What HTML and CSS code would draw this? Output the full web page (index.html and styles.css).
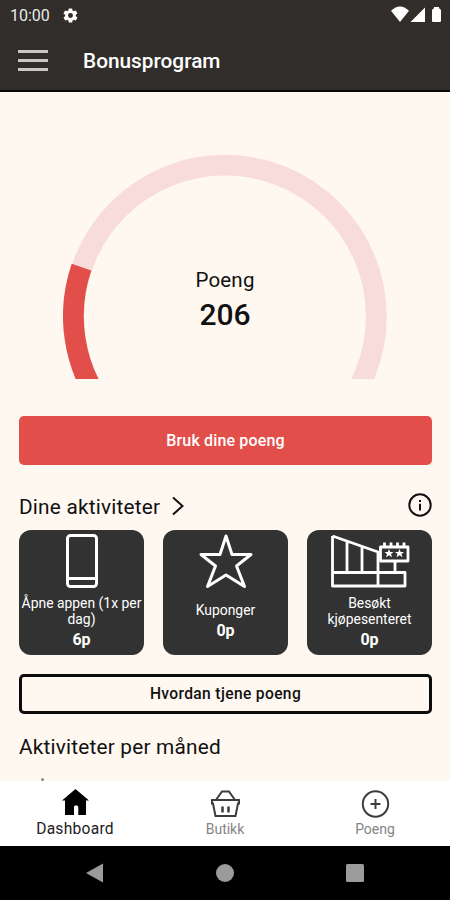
FILE: index.html
```
<!DOCTYPE html>
<html lang="no">
<head>
    <meta charset="UTF-8">
    <meta name="viewport" content="width=device-width, initial-scale=1.0">
    <title>Bonusprogram</title>
    <link rel="stylesheet" href="styles.css">
</head>
<body>
    <div class="app">
        <header class="header">
            <div class="status-bar">
                <span class="clock">10:00</span>
                <svg class="gear" width="17" height="17" viewBox="0 0 24 24">
                    <path d="M19.4 13a7.500 7.500 0 0 0 0-2l2.100-1.600a.5.5 0 0 0 .1-.6l-2-3.500a.5.5 0 0 0-.6-.2l-2.500 1a7.300 7.300 0 0 0-1.700-1l-.4-2.600a.5.5 0 0 0-.5-.4h-4a.5.5 0 0 0-.5.4L9 5.100a7.300 7.300 0 0 0-1.700 1l-2.500-1a.5.5 0 0 0-.6.2l-2 3.500a.5.5 0 0 0 .1.600L4.500 11a7.500 7.500 0 0 0 0 2l-2.100 1.600a.5.5 0 0 0-.1.600l2 3.500c.1.200.4.300.6.200l2.500-1a7.300 7.300 0 0 0 1.700 1l.4 2.600c0 .2.200.4.500.4h4c.2 0 .5-.2.500-.4l.4-2.600a7.300 7.300 0 0 0 1.700-1l2.500 1c.2.100.5 0 .6-.2l2-3.500a.5.5 0 0 0-.1-.6zM12 15.500a3.500 3.500 0 1 1 0-7 3.500 3.500 0 0 1 0 7z"/>
                </svg>
                <svg class="signals" width="54" height="18" viewBox="0 0 54 18">
                    <path d="M0 4.800Q9-3.800 18 4.800L9 16z"/>
                    <path d="M34 1.500V16H19.500z"/>
                    <path d="M41 4.500q0-1.500 2-2.200V1h5v1.300q2 .7 2 2.200V15q0 1-1 1h-7q-1 0-1-1z"/>
                </svg>
            </div>
            <div class="title-bar">
                <div class="menu"><span></span><span></span><span></span></div>
                <h1>Bonusprogram</h1>
            </div>
        </header>

        <main class="content">
            <div class="gauge">
                <svg width="324" height="225" viewBox="0 0 324 225">
                    <circle class="gauge-track" cx="162" cy="162.500" r="151.300"/>
                    <path class="gauge-value" d="M40 252A151.300 151.300 0 0 1 18.500 113.200"/>
                </svg>
                <div class="gauge-text">
                    <span class="gauge-label">Poeng</span>
                    <span class="gauge-number">206</span>
                </div>
            </div>

            <button class="btn-primary">Bruk dine poeng</button>

            <div class="section-head">
                <h2>Dine aktiviteter</h2>
                <svg class="chevron" width="12" height="20" viewBox="0 0 12 20"><path d="M1 1.500L10.500 10 1 18.500"/></svg>
                <svg class="info" width="24" height="24" viewBox="0 0 24 24">
                    <circle cx="12" cy="12" r="10.700"/>
                    <path d="M12 10.800v6.700M12 7v2"/>
                </svg>
            </div>

            <div class="cards">
                <div class="card">
                    <svg width="60" height="56" viewBox="0 0 60 56">
                        <rect x="15.500" y="2.500" width="29" height="51" rx="3"/>
                        <path d="M15.500 45.500h29"/>
                    </svg>
                    <span class="card-name">Åpne appen (1x per dag)</span>
                    <span class="card-points">6p</span>
                </div>
                <div class="card card-short">
                    <svg width="60" height="56" viewBox="0 0 60 56">
                        <path d="M30 3l6 18.500h19L40.500 33 48.500 53.500 30 42 11.500 53.500l8-20.500L5 21.500h19z"/>
                    </svg>
                    <span class="card-name">Kuponger</span>
                    <span class="card-points">0p</span>
                </div>
                <div class="card">
                    <svg class="mall" width="80" height="56" viewBox="0 0 80 56">
                        <path d="M2.500 3v50H75V39.500H2.500M2.500 3L48 19V53M17 8v31M32 13.500v26"/>
                        <path d="M65 28v11.500M50.500 14h27.500v14H50.500zM54.500 9.500v4M61 9.500v4M67.500 9.500v4M74 9.500v4"/>
                        <path class="stars" d="M59 16l1.200 3h3.300l-2.500 2 1 3.200-3-1.900-3 1.900 1-3.200-2.500-2h3.300zM69.500 16l1.200 3h3.300l-2.500 2 1 3.200-3-1.900-3 1.900 1-3.200-2.500-2h3.300z"/>
                    </svg>
                    <span class="card-name">Besøkt kjøpesenteret</span>
                    <span class="card-points">0p</span>
                </div>
            </div>

            <button class="btn-outline">Hvordan tjene poeng</button>

            <h2 class="month-title">Aktiviteter per måned</h2>
            <div class="chart-tick"></div>
        </main>

        <nav class="tabs">
            <a class="tab active">
                <svg width="30" height="30" viewBox="0 0 30 30"><path d="M15.500 1L29 12.500H26V27H18.300V19q0-1.500-1.500-1.500h-1.500Q14 17.500 14 19V27H5V12.500H2z"/></svg>
                <span>Dashboard</span>
            </a>
            <a class="tab">
                <svg width="30" height="30" viewBox="0 0 30 30"><path d="M2 12h27v3.500h-1L25.500 28h-20L3 15.500H2zM6 12l6-8.500h7l6 8.500"/><path class="slots" d="M12.500 18.500v6M18.500 18.500v6"/></svg>
                <span>Butikk</span>
            </a>
            <a class="tab">
                <svg width="30" height="30" viewBox="0 0 30 30"><circle cx="15.500" cy="16" r="12.700"/><path d="M15.500 11v10M10.500 16h10"/></svg>
                <span>Poeng</span>
            </a>
        </nav>

        <footer class="system-nav">
            <svg width="18" height="20" viewBox="0 0 18 20"><path d="M0 10L17 .5v19z"/></svg>
            <svg width="18" height="18" viewBox="0 0 18 18"><circle cx="9" cy="9" r="9"/></svg>
            <svg width="18" height="18" viewBox="0 0 18 18"><rect width="18" height="18" rx="1.500"/></svg>
        </footer>
    </div>
</body>
</html>
```
FILE: styles.css
```
* {
    box-sizing: border-box;
}
body {
    font-family: Roboto, "Liberation Sans", sans-serif;
    background-color: #fff8f1;
    color: #111;
    margin: 0;
}
h1, h2 {
    margin: 0;
}
button {
    font-family: inherit;
    display: block;
    width: 100%;
    padding: 0;
}
.app {
    display: flex;
    flex-direction: column;
    height: 900px;
    overflow: hidden;
}

/* Header */
.header {
    height: 92px;
    background-color: #302d2b;
    border-bottom: 2px solid #090807;
    color: #fff;
}
.status-bar {
    display: flex;
    align-items: center;
    height: 30px;
    padding: 0 5px 0 10px;
    fill: #fff;
}
.clock {
    width: 40px;
    font-size: 16px;
    color: #e8e8e8;
}
.gear {
    margin-left: 12px;
}
.signals {
    margin-left: auto;
}
.title-bar {
    display: flex;
    align-items: center;
    height: 62px;
    padding-left: 18px;
}
.menu {
    display: flex;
    flex-direction: column;
    gap: 6px;
    width: 30px;
    margin-right: 35px;
    margin-top: -2px;
}
.menu span {
    height: 3px;
    background-color: #c9cac6;
}
h1 {
    font-size: 20.8px;
    font-weight: 500;
}

/* Content */
.content {
    height: 689px;
    padding: 62px 18px 0 19px;
    overflow: hidden;
}
.gauge {
    position: relative;
    width: 324px;
    height: 225px;
    margin: 0 auto 37px 44px;
}
.gauge svg {
    display: block;
}
.gauge-track, .gauge-value {
    fill: none;
    stroke-width: 20.8;
}
.gauge-track {
    stroke: #f8dcda;
}
.gauge-value {
    stroke: #e24f4a;
}
.gauge-text {
    position: absolute;
    top: 113px;
    left: 0;
    width: 100%;
    display: flex;
    flex-direction: column;
    align-items: center;
}
.gauge-label {
    font-size: 20.5px;
    line-height: 26px;
    letter-spacing: 0.2px;
}
.gauge-number {
    font-size: 30px;
    line-height: 44px;
    font-weight: 500;
}
.btn-primary {
    height: 49px;
    border: none;
    border-radius: 5px;
    background-color: #e24f4a;
    color: #fff;
    font-size: 16px;
    font-weight: 500;
    letter-spacing: 0.15px;
}
.section-head {
    display: flex;
    align-items: center;
    height: 24px;
    margin: 30px 0 11px;
}
h2 {
    font-size: 20.8px;
    font-weight: 400;
    line-height: 26px;
    letter-spacing: 0.2px;
}
.chevron, .info {
    fill: none;
    stroke: #111;
    stroke-width: 2;
}
.chevron {
    margin-left: 12px;
    margin-top: -2px;
}
.info {
    margin-left: auto;
    margin-top: -4px;
}
.cards {
    display: flex;
    gap: 19px;
}
.card {
    display: flex;
    flex-direction: column;
    align-items: center;
    flex: 1;
    height: 125px;
    padding-top: 3px;
    border-radius: 12px;
    background-color: #323232;
    color: #fff;
    text-align: center;
}
.card svg {
    fill: none;
    stroke: #fff;
    stroke-width: 3;
    stroke-linejoin: round;
    flex-shrink: 0;
}
.card .mall {
    stroke-width: 2.8;
}
.card .stars {
    fill: #fff;
    stroke: none;
}
.card-name {
    width: 122px;
    margin-top: 6px;
    font-size: 13.9px;
    line-height: 16px;
}
.card-short .card-name {
    margin-top: 13px;
}
.card-points {
    margin-top: 3px;
    font-size: 16px;
    line-height: 20px;
    font-weight: 700;
}
.btn-outline {
    height: 40px;
    margin: 19px 0 20px;
    border: 3px solid #0b0b0b;
    border-radius: 5px;
    background: none;
    color: #111;
    font-size: 15.6px;
    font-weight: 500;
    letter-spacing: 0.35px;
}
.chart-tick {
    width: 3px;
    height: 3px;
    margin: 18px 0 0 22px;
    border-radius: 50%;
    background-color: #8b8782;
}

/* Bottom bars */
.tabs {
    display: flex;
    height: 65px;
    background-color: #fff;
}
.tab {
    display: flex;
    flex-direction: column;
    align-items: center;
    flex: 1;
    padding-top: 7px;
    color: #858585;
    font-size: 14px;
    line-height: 18px;
}
.tab svg {
    margin-bottom: 2px;
    fill: none;
    stroke: #3c3c3c;
    stroke-width: 2;
}
.tab .slots {
    stroke-width: 2.5;
}
.tab.active {
    color: #222;
    font-size: 15.6px;
    letter-spacing: 0.25px;
}
.tab.active svg {
    fill: #000;
    stroke: none;
}
.system-nav {
    display: flex;
    align-items: center;
    justify-content: space-between;
    height: 54px;
    padding: 0 86px;
    background-color: #000;
    fill: #9b9b9b;
}
```
